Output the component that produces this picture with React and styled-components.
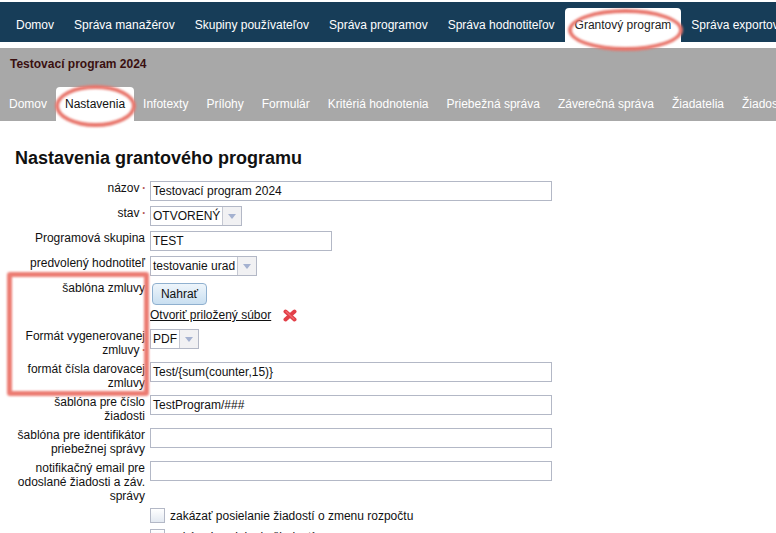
import React from "react";
import styled, { createGlobalStyle } from "styled-components";

const Global = createGlobalStyle`
  html, body {
    margin: 0;
    padding: 0;
    background: #fff;
    overflow: hidden;
    font-family: "Liberation Sans", Arial, sans-serif;
  }
  * { box-sizing: border-box; }
`;

const Page = styled.div`
  position: relative;
  width: 776px;
  height: 533px;
  overflow: hidden;
`;

const TopBar = styled.nav`
  margin-top: 2px;
  height: 40px;
  background: #173d58;
  display: flex;
  align-items: flex-end;
  padding-left: 6px;
  white-space: nowrap;
`;

const TopItem = styled.a`
  height: 34px;
  padding: 0 10px;
  display: flex;
  align-items: center;
  font-size: 12px;
  border-radius: 4px 4px 0 0;
  color: ${(p) => (p.$active ? "#222" : "#fff")};
  background: ${(p) => (p.$active ? "#fff" : "transparent")};
`;

const SubHeader = styled.div`
  margin-top: 6px;
  height: 73px;
  background: #a8a8a8;
  display: flex;
  flex-direction: column;
  justify-content: space-between;
`;

const ProgramName = styled.div`
  padding: 9px 0 0 10px;
  font-size: 12px;
  font-weight: bold;
  color: #3a1010;
`;

const SubTabs = styled.nav`
  display: flex;
  align-items: flex-end;
  white-space: nowrap;
`;

const SubItem = styled.a`
  height: 34px;
  padding: 0 9px;
  display: flex;
  align-items: center;
  font-size: 12px;
  border-radius: 4px 4px 0 0;
  color: ${(p) => (p.$active ? "#111" : "#fff")};
  background: ${(p) => (p.$active ? "#fff" : "transparent")};
`;

const Content = styled.main`
  padding-top: 27px;
`;

const Title = styled.h1`
  margin: 0 0 12px 15px;
  font-size: 18px;
  line-height: 21px;
  font-weight: bold;
  color: #111;
`;

const Form = styled.div`
  display: flex;
  flex-direction: column;
`;

const Row = styled.div`
  display: grid;
  grid-template-columns: 145px 1fr;
  column-gap: 5px;
  height: ${(p) => p.$h}px;
  align-items: start;
`;

const Label = styled.label`
  display: block;
  padding-left: 15px;
  font-size: 12px;
  line-height: 14px;
  text-align: right;
  color: #111;
`;

const Req = styled.span`
  color: #b05050;
  font-size: 7px;
  margin-left: 3px;
  vertical-align: 2px;
`;

const Input = styled.div`
  width: ${(p) => p.$w}px;
  height: 20px;
  border: 1px solid #b3b8c6;
  background: #fff;
  padding-left: 2px;
  font-size: 12px;
  line-height: 18px;
  color: #111;
`;

const SelectBox = styled.div`
  display: inline-flex;
  height: 20px;
  border: 1px solid #b3b8c6;
  font-size: 12px;
  line-height: 18px;
  color: #111;
  background: #fff;
`;

const SelectValue = styled.span`
  padding: 0 2px;
`;

const SelectArrow = styled.span`
  width: 19px;
  border-left: 1px solid #c5c8d2;
  background: #f1f1f3;
  display: flex;
  align-items: center;
  justify-content: center;

  &::after {
    content: "";
    border-left: 4px solid transparent;
    border-right: 4px solid transparent;
    border-top: 5px solid #a4b1d0;
  }
`;

const UploadButton = styled.button`
  display: block;
  margin: 2px 0 0 2px;
  width: 55px;
  height: 22px;
  padding: 0;
  border: 1px solid #8fb0cf;
  border-radius: 4px;
  background: linear-gradient(#eef5fb, #c9dff1);
  font: 12px "Liberation Sans", Arial, sans-serif;
  color: #111;
`;

const FileLine = styled.div`
  display: flex;
  align-items: center;
  gap: 12px;
  margin-top: 3px;
  font-size: 12px;
  line-height: 14px;
`;

const FileLink = styled.a`
  color: #111;
  text-decoration: underline;
`;

const CheckList = styled.div`
  display: flex;
  flex-direction: column;
  gap: 6px;
  margin-left: 150px;
`;

const CheckRow = styled.div`
  display: flex;
  align-items: center;
  gap: 5px;
  height: 15px;
  font-size: 12px;
  color: #111;
`;

const CheckBox = styled.span`
  width: 15px;
  height: 15px;
  border: 1px solid #b3b8c6;
  background: linear-gradient(#fff, #e3e9f1);
  flex: none;
`;

const Ellipse = styled.div`
  position: absolute;
  left: ${(p) => p.$x}px;
  top: ${(p) => p.$y}px;
  width: ${(p) => p.$w}px;
  height: ${(p) => p.$h}px;
  border: 4px solid #e8756b;
  border-radius: 50%;
  filter: blur(1px);
  pointer-events: none;
`;

const Frame = styled.div`
  position: absolute;
  left: 7px;
  top: 272px;
  width: 142px;
  height: 124px;
  border: 5px solid #ec7c73;
  border-radius: 3px;
  filter: blur(1px);
  pointer-events: none;
`;

const topItems = ["Domov", "Správa manažérov", "Skupiny používateľov", "Správa programov", "Správa hodnotiteľov"];
const subItems = ["Infotexty", "Prílohy", "Formulár", "Kritériá hodnotenia", "Priebežná správa", "Záverečná správa", "Žiadatelia", "Žiadosti"];

const RemoveIcon = () => (
  <svg width="14" height="13" viewBox="0 0 14 13">
    <path d="M2.5 2.5 L11.5 10.5 M11.5 2.5 L2.5 10.5" fill="none" stroke="#e23f48" strokeWidth="4" strokeLinecap="round" />
    <path d="M3 2.5 L11 10" fill="none" stroke="#f0696f" strokeWidth="1.2" strokeLinecap="round" />
  </svg>
);

export default function App() {
  return (
    <Page>
      <Global />
      <TopBar>
        {topItems.map((t) => (
          <TopItem key={t}>{t}</TopItem>
        ))}
        <TopItem $active>Grantový program</TopItem>
        <TopItem>Správa exportov</TopItem>
      </TopBar>
      <SubHeader>
        <ProgramName>Testovací program 2024</ProgramName>
        <SubTabs>
          <SubItem>Domov</SubItem>
          <SubItem $active>Nastavenia</SubItem>
          {subItems.map((t) => (
            <SubItem key={t}>{t}</SubItem>
          ))}
        </SubTabs>
      </SubHeader>
      <Content>
        <Title>Nastavenia grantového programu</Title>
        <Form>
          <Row $h={25}>
            <Label>názov<Req>•</Req></Label>
            <Input $w={402}>Testovací program 2024</Input>
          </Row>
          <Row $h={25}>
            <Label>stav<Req>•</Req></Label>
            <div>
              <SelectBox>
                <SelectValue>OTVORENÝ</SelectValue>
                <SelectArrow />
              </SelectBox>
            </div>
          </Row>
          <Row $h={25}>
            <Label>Programová skupina</Label>
            <Input $w={182}>TEST</Input>
          </Row>
          <Row $h={25}>
            <Label>predvolený hodnotiteľ</Label>
            <div>
              <SelectBox>
                <SelectValue>testovanie urad</SelectValue>
                <SelectArrow />
              </SelectBox>
            </div>
          </Row>
          <Row $h={48}>
            <Label>šablóna zmluvy</Label>
            <div>
              <UploadButton>Nahrať</UploadButton>
              <FileLine>
                <FileLink>Otvoriť priložený súbor</FileLink>
                <RemoveIcon />
              </FileLine>
            </div>
          </Row>
          <Row $h={33}>
            <Label>Formát vygenerovanej zmluvy<Req>•</Req></Label>
            <div>
              <SelectBox>
                <SelectValue>PDF</SelectValue>
                <SelectArrow />
              </SelectBox>
            </div>
          </Row>
          <Row $h={33}>
            <Label>formát čísla darovacej zmluvy</Label>
            <Input $w={402}>Test/{"{sum(counter,15)}"}</Input>
          </Row>
          <Row $h={33}>
            <Label>šablóna pre číslo žiadosti</Label>
            <Input $w={402}>TestProgram/###</Input>
          </Row>
          <Row $h={33}>
            <Label>šablóna pre identifikátor priebežnej správy</Label>
            <Input $w={402} />
          </Row>
          <Row $h={47}>
            <Label>notifikačný email pre odoslané žiadosti a záv. správy</Label>
            <Input $w={402} />
          </Row>
        </Form>
        <CheckList>
          <CheckRow>
            <CheckBox />
            zakázať posielanie žiadostí o zmenu rozpočtu
          </CheckRow>
          <CheckRow>
            <CheckBox />
            zakázať posielanie žiadostí o zmenu
          </CheckRow>
        </CheckList>
      </Content>
      <Ellipse $x={568} $y={9} $w={115} $h={42} />
      <Ellipse $x={55} $y={85} $w={81} $h={42} />
      <Frame />
    </Page>
  );
}
